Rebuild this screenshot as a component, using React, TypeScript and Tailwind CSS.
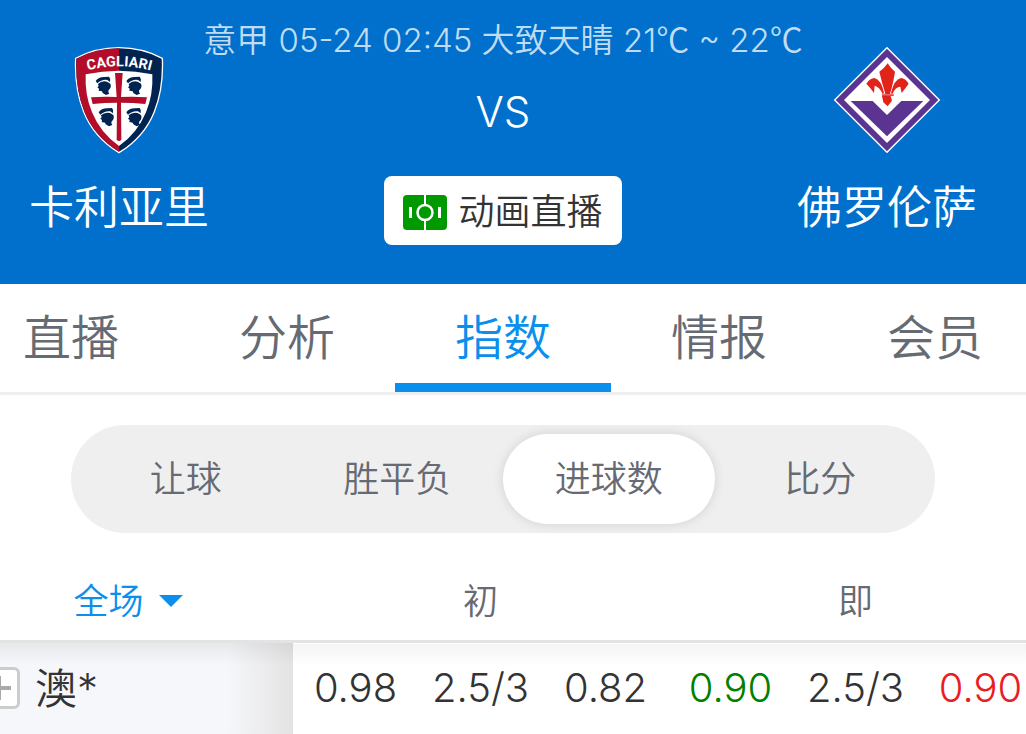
import { useState } from "react"

const TABS = ["直播", "分析", "指数", "情报", "会员"]
const MARKETS = ["让球", "胜平负", "进球数", "比分"]

const ODDS = [
  { value: "0.98", color: "text-[#333333]" },
  { value: "2.5/3", color: "text-[#333333]" },
  { value: "0.82", color: "text-[#333333]" },
  { value: "0.90", color: "text-[#008000]" },
  { value: "2.5/3", color: "text-[#333333]" },
  { value: "0.90", color: "text-[#ea1c24]" },
]

const HEADS = [
  { x: 108, y: 125 },
  { x: 200, y: 125 },
  { x: 117, y: 219 },
  { x: 200, y: 219 },
]

const CagliariCrest = () => (
  <svg aria-hidden="true" className="h-[108px] w-[90px]" viewBox="43 33 270 324">
    <defs>
      <clipPath id="crest-left">
        <rect height="330" width="135" x="43" y="30" />
      </clipPath>
      <path d="M80 107 Q178 80 278 108" id="crest-arc" />
    </defs>
    <path
      d="M48 70 Q108 38 178 38 Q248 38 308 70 Q312 160 284 230 Q254 306 178 353 Q102 306 72 230 Q44 160 48 70Z"
      fill="#002350"
      stroke="#fff"
      strokeWidth="4"
    />
    <path
      clipPath="url(#crest-left)"
      d="M50 71 Q108 40 178 40 Q248 40 306 71 Q310 160 282 230 Q252 304 178 350 Q104 304 74 230 Q46 160 50 71Z"
      fill="#b30d2a"
    />
    <path
      d="M78 118 Q178 96 278 118 Q281 180 259 232 Q233 295 178 333 Q123 295 97 232 Q75 180 78 118Z"
      fill="#fff"
    />
    <path
      d="M166 114 H189 L184 186 Q226 184 262 187 L257 207 Q220 203 184 203 L185 314 Q178 322 171 314 L172 203 Q136 203 99 207 L94 187 Q130 184 171 186Z"
      fill="#b30d2a"
    />
    {HEADS.map(({ x, y }) => (
      <g key={`${x}-${y}`} fill="#002350" transform={`translate(${x} ${y})`}>
        <path d="M0 13 Q8 1 25 1 L40 0 Q46 6 43 16 L35 10 Q19 7 5 20Z" />
        <path d="M7 22 Q18 11 34 15 L44 21 Q48 31 41 38 L38 42 Q38 48 41 51 L31 55 L21 49 L19 44 L9 42 L10 36 L5 32 L9 28Z" />
      </g>
    ))}
    <text
      fill="#fff"
      fontFamily="'Roboto', 'Liberation Sans', sans-serif"
      fontSize="43"
      fontWeight="700"
      textAnchor="middle"
    >
      <textPath href="#crest-arc" startOffset="50%">
        CAGLIARI
      </textPath>
    </text>
  </svg>
)

const FiorentinaCrest = () => (
  <svg aria-hidden="true" className="size-[108px]" viewBox="39 33 324 324">
    <path d="M201 35 L361 195 L201 355 L41 195Z" fill="#fff" />
    <path d="M201 41 L355 195 L201 349 L47 195Z" fill="#5b3390" />
    <path d="M201 66 L330 195 L201 324 L72 195Z" fill="#fff" />
    <path d="M92 198 H158 L201 240 L244 198 H310 L201 304Z" fill="#5b3390" />
    <g fill="#e2231a">
      <path d="M203 85 Q212 100 225 110 Q219 148 210 176 H221 V183 H212 L216 197 L203 214 L190 202 L186 183 V176 H196 Q186 145 178 110 Q193 100 203 85Z" />
      <path d="M139 146 Q150 130 163 129 Q184 134 192 174 L188 177 Q178 155 164 152 L162 174 Q151 158 139 146Z" />
      <path d="M266 146 Q256 130 243 129 Q222 134 213 174 L217 177 Q227 155 241 155 L245 174 Q256 160 266 146Z" />
    </g>
    <path d="M186 179.500 H221" stroke="#fff" strokeWidth="1.500" />
  </svg>
)

const PitchIcon = () => (
  <svg aria-hidden="true" className="h-[35px] w-[44px]" viewBox="0 0 44 35">
    <rect fill="#009900" height="35" rx="4" width="44" />
    <g fill="none" stroke="#fff" strokeWidth="2">
      <path d="M22 0 V10 M22 25 V35" />
      <circle cx="22" cy="17.500" r="7.500" strokeWidth="2.500" />
      <path d="M7.500 12 V23 M36.500 12 V23" strokeWidth="3" />
    </g>
  </svg>
)

// The CJK face draws the degree sign as one full-width glyph
const Celsius = () => <span className="font-['Noto_Sans_CJK_SC',sans-serif] leading-none">℃</span>

const Team = ({ name, children }: { name: string; children: React.ReactNode }) => (
  <div className="flex w-[180px] shrink-0 flex-col items-center pt-[46px]">
    {children}
    <span className="mt-6 whitespace-nowrap text-[45px] leading-[60px]">{name}</span>
  </div>
)

const MatchHeader = () => (
  <header className="flex justify-between bg-[#0070cc] px-[66px] pb-[39px] text-white">
    <Team name="卡利亚里">
      <CagliariCrest />
    </Team>

    <div className="flex min-w-0 flex-1 flex-col items-center pt-4">
      <p className="whitespace-nowrap text-[33px] leading-[48px] text-[#bfdcf3]">
        意甲 05-24 02:45 大致天晴 21
        <Celsius /> ~ 22
        <Celsius />
      </p>
      <p className="mt-4 text-[42px] leading-[64px]">VS</p>
      <button
        className="mt-8 flex h-[69px] items-center gap-[11px] rounded-lg bg-white px-[19px] pt-[3px] text-[36px] text-[#333333]"
        type="button"
      >
        <PitchIcon />
        动画直播
      </button>
    </div>

    <Team name="佛罗伦萨">
      <FiorentinaCrest />
    </Team>
  </header>
)

const OddsTable = () => (
  <table className="mt-[30px] w-full table-fixed border-collapse">
    <colgroup>
      <col className="w-[330px]" />
      <col span={6} />
    </colgroup>
    <thead className="text-[35px] text-[#666a73]">
      <tr className="h-[78px]">
        <th className="p-0 font-[350]" scope="col">
          <label className="inline-flex items-center gap-[14px] text-[#0a8fec]">
            <select aria-label="全场" className="appearance-none bg-transparent" defaultValue="full">
              <option value="full">全场</option>
            </select>
            <svg aria-hidden="true" className="h-3 w-6" viewBox="0 0 24 12">
              <path d="M0 0 H24 L12 12Z" fill="currentColor" />
            </svg>
          </label>
        </th>
        <th className="p-0 font-[350]" colSpan={3} scope="colgroup">
          初
        </th>
        <th className="p-0 font-[350]" colSpan={3} scope="colgroup">
          即
        </th>
      </tr>
    </thead>
    <tbody>
      <tr className="h-[93px] border-t-[3px] border-[#e3e3e3] bg-linear-to-b from-[#f4f4f4] to-white to-25%">
        <th
          className="bg-linear-to-r from-[#f6f7fa] from-80% to-[#e3e3e3] p-0 font-[350]"
          scope="row"
        >
          <div className="flex h-[90px] items-center gap-[15px] bg-linear-to-b from-black/6 to-transparent to-25% pl-[15px] text-[42px] text-[#333333]">
            <button
              aria-label="展开"
              className="flex size-[42px] items-center justify-center rounded-md border-[3px] border-[#cccccc] bg-white text-[#aaaaaa]"
              type="button"
            >
              <svg aria-hidden="true" className="size-6" viewBox="0 0 24 24">
                <path d="M0 12 H24 M12 0 V24" stroke="currentColor" strokeWidth="4" />
              </svg>
            </button>
            澳*
          </div>
        </th>
        {ODDS.map(({ value, color }, index) => (
          <td className={`p-0 text-center text-[40px] font-light ${color}`} key={index}>
            {value}
          </td>
        ))}
      </tr>
    </tbody>
  </table>
)

const App = () => {
  const [tab, setTab] = useState("指数")
  const [market, setMarket] = useState("进球数")

  return (
    <div className="overflow-hidden bg-white font-['Inter','Noto_Sans_CJK_SC',sans-serif] font-[350]">
      <div className="-mr-[17px] -ml-[37px]">
        <MatchHeader />

        <nav className="flex border-b-[3px] border-[#efefef]">
          {TABS.map((name) => (
            <button
              className={`h-[108px] flex-1 border-b-9 pt-2 text-[48px] ${
                name === tab ? "border-[#0a8fec] text-[#0a8fec]" : "border-transparent text-[#666a73]"
              }`}
              key={name}
              onClick={() => setTab(name)}
              type="button"
            >
              {name}
            </button>
          ))}
        </nav>

        <div className="mx-[108px] mt-[30px] flex rounded-full bg-[#efefef] p-[9px]">
          {MARKETS.map((name) => (
            <button
              className={`h-[90px] flex-1 rounded-full text-[36px] text-[#666a73] ${
                name === market ? "bg-white shadow-[0_0_12px_rgba(0,0,0,.12)]" : ""
              }`}
              key={name}
              onClick={() => setMarket(name)}
              type="button"
            >
              {name}
            </button>
          ))}
        </div>

        <OddsTable />
      </div>
    </div>
  )
}

export default App
